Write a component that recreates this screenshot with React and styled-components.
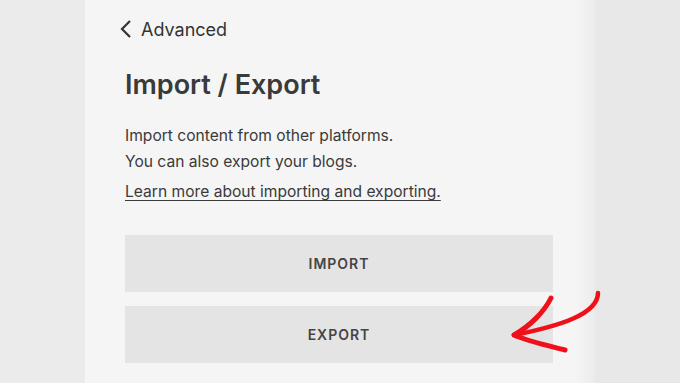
import React from "react"
import styled, { createGlobalStyle } from "styled-components"

const GlobalStyle = createGlobalStyle`
  html, body {
    margin: 0;
    padding: 0;
    background: #ebebeb;
    font-family: Inter, "Liberation Sans", sans-serif;
  }
`

const Page = styled.div`
  display: flex;
  height: 383px;
  width: 680px;
  overflow: hidden;
  position: relative;
`

const Gutter = styled.div`
  width: 85px;
  background: #ebebeb;
`

const Panel = styled.div`
  width: 510px;
  background: linear-gradient(to right, #f5f5f5 0, #f5f5f5 490px, #ececec 510px);
  padding: 17px 0 0 40px;
  box-sizing: border-box;
  display: flex;
  flex-direction: column;
`

const RightSide = styled.div`
  flex: 1;
  background: #e8e8e8;
`

const Back = styled.div`
  display: flex;
  align-items: center;
  gap: 8px;
  margin-left: -6px;
  color: #333;
  font-size: 18px;
  height: 24px;
`

const Title = styled.h1`
  margin: 27px 0 0;
  font-size: 27px;
  font-weight: 600;
  color: #3a3a3a;
  line-height: 34px;
`

const Text = styled.p`
  margin: 0;
  font-size: 15.6px;
  line-height: 26px;
  color: #3a3a3a;
  &:first-of-type {
    margin-top: 21px;
  }
`

const Link = styled.a`
  display: block;
  margin-top: 4px;
  font-size: 15.6px;
  line-height: 26px;
  color: #3a3a3a;
  text-decoration: underline;
  text-underline-offset: 3px;
`

const Buttons = styled.div`
  margin-top: 30px;
  width: 428px;
  display: flex;
  flex-direction: column;
  gap: 14px;
`

const Button = styled.button`
  height: 57px;
  border: none;
  background: #e4e4e4;
  color: #444;
  font-family: inherit;
  font-size: 14px;
  font-weight: 600;
  letter-spacing: 1px;
`

const Arrow = styled.svg`
  position: absolute;
  left: 500px;
  top: 280px;
`

const App = () => (
  <Page>
    <GlobalStyle />
    <Gutter />
    <Panel>
      <Back>
        <svg width="14" height="20" viewBox="0 0 14 20">
          <path d="M11 2 L3 10 L11 18" fill="none" stroke="#333" strokeWidth="2.2" />
        </svg>
        Advanced
      </Back>
      <Title>Import / Export</Title>
      <Text>Import content from other platforms.</Text>
      <Text>You can also export your blogs.</Text>
      <Link>Learn more about importing and exporting.</Link>
      <Buttons>
        <Button>IMPORT</Button>
        <Button>EXPORT</Button>
      </Buttons>
    </Panel>
    <RightSide />
    <Arrow width="110" height="80" viewBox="0 0 110 80">
      <g fill="none" stroke="#f0101a" strokeLinecap="round" strokeLinejoin="round">
        <path d="M98 13 C 98 34 60 46 14 55" strokeWidth="4.5" />
        <path d="M51 18 C 44 32 30 46 14 55 C 30 62 50 66 65 70" strokeWidth="5" />
      </g>
    </Arrow>
  </Page>
)

export default App
